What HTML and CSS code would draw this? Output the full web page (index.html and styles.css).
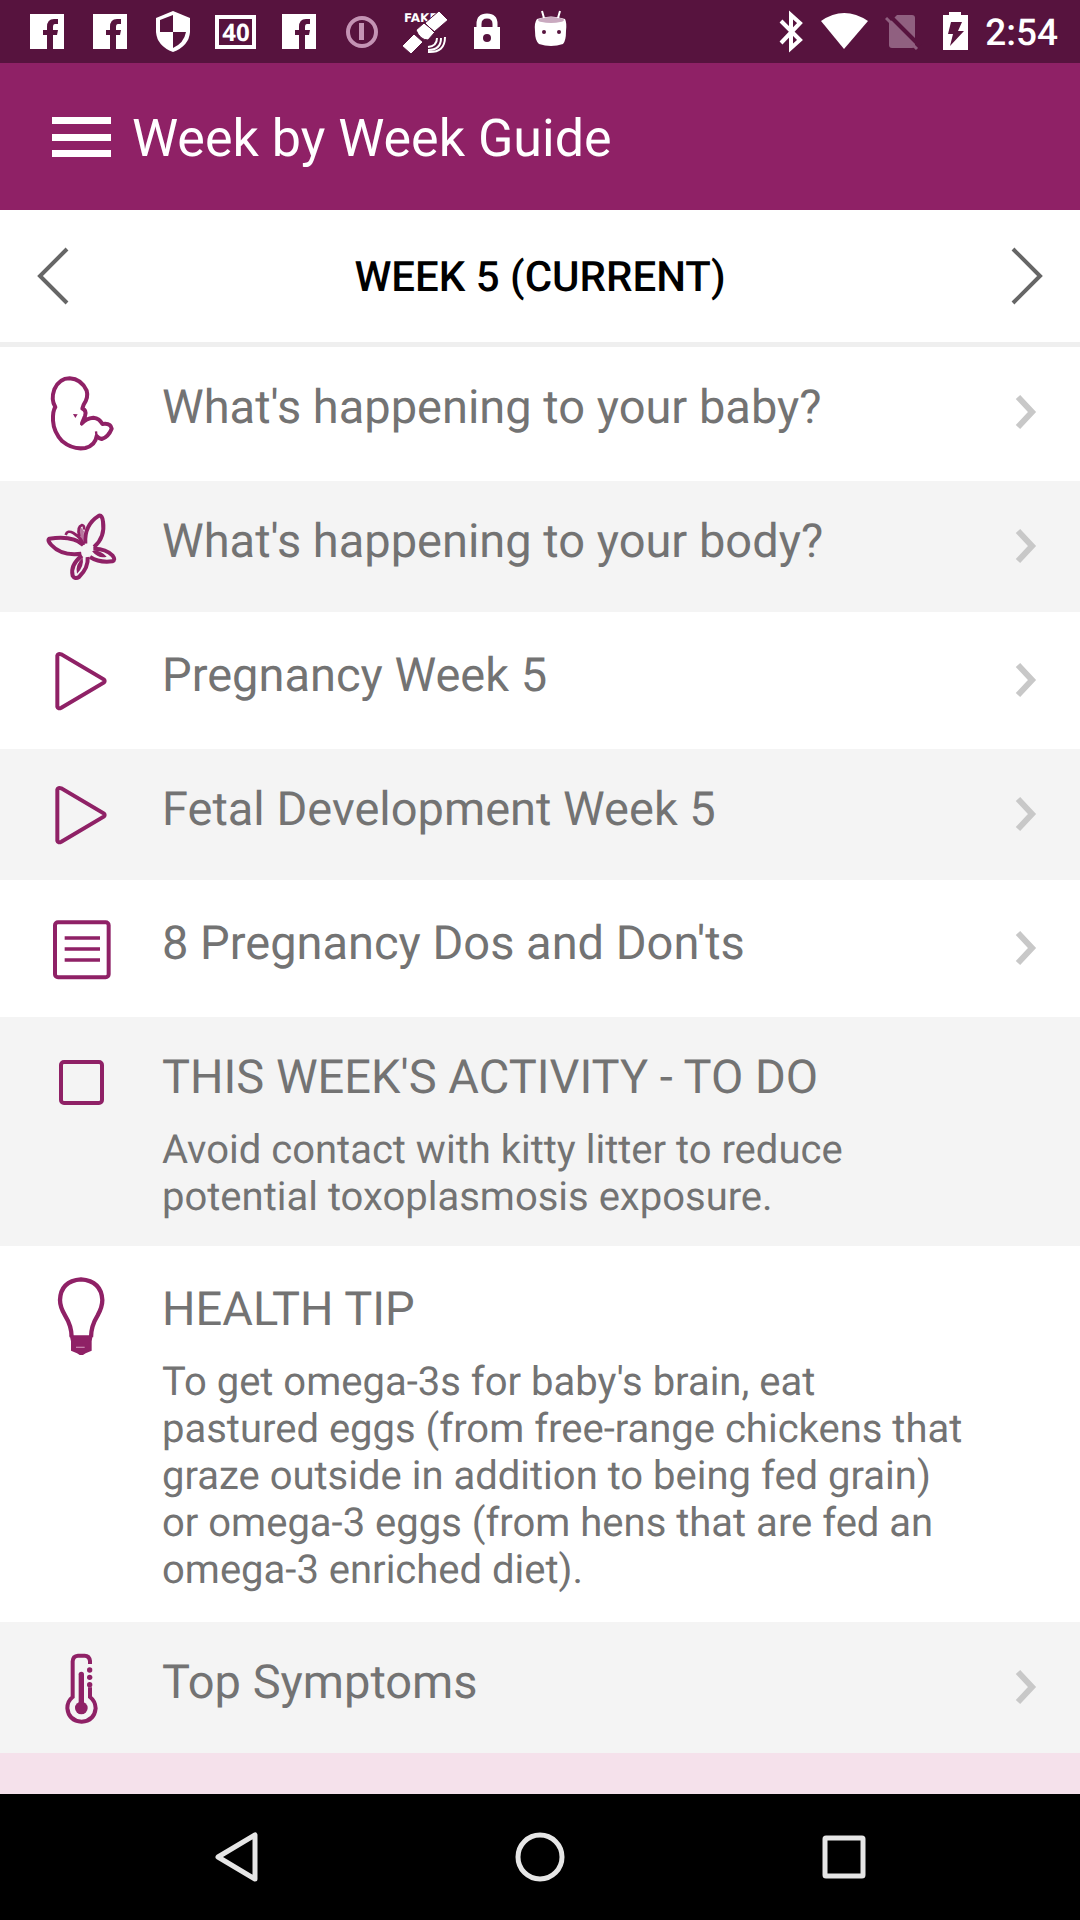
FILE: index.html
```html
<!DOCTYPE html>
<html lang="en">
<head>
<meta charset="utf-8">
<meta name="viewport" content="width=device-width, initial-scale=1">
<title>Week by Week Guide</title>
<link rel="stylesheet" href="styles.css">
</head>
<body>
<svg class="defs" aria-hidden="true">
  <symbol id="facebook" viewBox="0 0 63 63"><path fill="#fff" d="M14 14h34v35H14z"/><path fill="#57133e" d="M31 49V35h-4v-5h4v-3q0-8 7-8h4v5h-3q-2 0-2 3v3h5l-1 5h-4v14z"/></symbol>
  <symbol id="chevron" viewBox="0 0 24 36"><path d="M3 3l14 15L3 33" fill="none" stroke="currentColor" stroke-width="6"/></symbol>
  <symbol id="play" viewBox="63 121 240 240"><path d="M112 165V318Q114 326 124 321L251 246Q257 241 251 236L124 161Q114 158 112 165Z" fill="none" stroke="currentColor" stroke-width="12"/></symbol>
</svg>

<div class="status-bar">
  <div class="notifications">
    <svg class="note"><use href="#facebook"/></svg>
    <svg class="note"><use href="#facebook"/></svg>
    <svg class="note" viewBox="0 0 63 63"><path fill="#fff" d="M31 11l17 7v14q-1 14-17 20Q15 46 14 32V18z"/><path fill="#57133e" d="M31 15v17H18V20zM31 32h13q-2 11-13 16z"/></svg>
    <svg class="note" viewBox="0 0 63 63"><rect x="12" y="17" width="37" height="30" fill="none" stroke="#fff" stroke-width="4"/><text x="31" y="41" class="battery-level">40</text></svg>
    <svg class="note"><use href="#facebook"/></svg>
    <svg class="note" viewBox="0 0 63 63"><circle cx="31" cy="32" r="14" fill="none" stroke="#c493b4" stroke-width="4"/><rect x="28" y="23" width="5" height="17" fill="#c493b4"/></svg>
    <svg class="note" viewBox="0 0 63 63"><text x="10" y="22" class="fake">FAKE</text><path fill="#fff" stroke="#57133e" stroke-width="1" d="M8 46l12-12 9 8-12 12zM22 30l8-7 11 9-7 8q-8 0-12-10zM31 23L45 11l9 9-14 12z"/><path d="M43 38q0 8-9 9M47 38q0 12-13 12M51 37q0 16-17 15" fill="none" stroke="#fff" stroke-width="2"/></svg>
    <svg class="note" viewBox="0 0 63 63"><rect x="17" y="27" width="26" height="22" fill="#fff"/><path d="M22 28v-4q0-8 8-8t8 8v4" fill="none" stroke="#fff" stroke-width="5"/><circle cx="30" cy="38" r="4" fill="#57133e"/></svg>
    <svg class="note" viewBox="0 0 63 63"><path d="M17 19q14-5 28 0 2 4 1 12 0 10-3 13-12 4-24 0-4-3-4-13-1-8 2-12z" fill="#fff"/><ellipse cx="31" cy="20" rx="13" ry="3" fill="#c9a9bf"/><path d="M24 18l-2-7M38 18l2-7" stroke="#fff" stroke-width="2"/><circle cx="24" cy="32" r="2" fill="#57133e"/><circle cx="39" cy="32" r="2" fill="#57133e"/></svg>
  </div>
  <div class="system">
    <svg width="25" height="63" viewBox="0 0 25 63"><path d="M2 21l19 19-9 8V15l9 8L2 43" fill="none" stroke="#fff" stroke-width="4"/></svg>
    <svg width="47" height="63" viewBox="0 0 47 63"><path d="M0 21q23-16 47 0L23 49z" fill="#fff"/></svg>
    <svg width="41" height="63" viewBox="0 0 41 63"><path d="M4 23l8-8h15q3 0 3 3v27q0 3-3 3H7q-3 0-3-3z" fill="#906080"/><path d="M3 14l32 32" stroke="#57133e" stroke-width="4"/><path d="M1 18l31 31" stroke="#906080" stroke-width="3"/></svg>
    <svg width="25" height="63" viewBox="0 0 25 63"><path d="M0 15h6v-3h12v3h7v35H0z" fill="#fff"/><path d="M8 22h11l-4 9h6L7 46l3-12H5z" fill="#57133e"/></svg>
    <span class="clock">2:54</span>
  </div>
</div>

<header class="app-bar">
  <button class="menu" aria-label="Menu"><svg width="59" height="40" viewBox="0 0 59 40"><path d="M0 0h59v7H0zM0 17h59v7H0zM0 33h59v7H0z" fill="#fff"/></svg></button>
  <h1 class="title">Week by Week Guide</h1>
</header>

<main class="content">
  <div class="week">
    <button class="step" aria-label="Previous week"><svg width="32" height="58" viewBox="0 0 32 58"><path d="M30 2L3 29l27 27" fill="none" stroke="#666" stroke-width="4"/></svg></button>
    <h2 class="week-name">WEEK 5 (CURRENT)</h2>
    <button class="step" aria-label="Next week"><svg width="32" height="58" viewBox="0 0 32 58"><path d="M2 2l27 27L2 56" fill="none" stroke="#666" stroke-width="4"/></svg></button>
  </div>

  <ul class="list">
    <li><a class="row" href="#baby">
      <span class="icon"><svg class="glyph" viewBox="63 69 240 240"><path d="M106 171Q92 149 103 118Q118 85 149 85Q184 87 200 122Q206 143 191 164L187 176Q201 181 195 198L186 220Q198 205 220 203Q239 205 247 222Q272 218 275 236Q265 261 245 267Q236 265 230 258Q226 286 196 294Q158 300 127 274Q101 247 99 212Q98 182 106 171Z" fill="none" stroke="currentColor" stroke-width="12" stroke-linejoin="round"/><path d="M228 244l2 18M183 226l10-17" stroke="currentColor" stroke-width="7"/><path d="M159 192l14 1-7 11z" fill="currentColor"/></svg></span>
      <span class="name">What's happening to your baby?</span>
      <svg class="more"><use href="#chevron"/></svg></a></li>
    <li><a class="row shade" href="#body">
      <span class="icon"><svg class="glyph" viewBox="63 472 240 240"><g fill="none" stroke="currentColor" stroke-width="12" stroke-linejoin="round"><path d="M196 582Q192 526 237 498Q247 496 249 516Q256 563 222 592"/><path d="M190 586Q160 557 88 567Q81 572 94 586Q125 620 184 612"/><path d="M186 618Q150 646 158 678Q165 690 177 682Q206 654 203 622"/><path d="M210 622Q238 640 277 635Q288 631 278 618Q257 596 220 597"/></g><path d="M137 556Q142 540 160 550Q185 565 191 586M178 560Q170 532 186 526Q194 527 192 540" fill="none" stroke="currentColor" stroke-width="8"/><path d="M188 624Q164 645 171 672Q193 650 188 624zM216 605Q237 598 260 621Q237 629 216 605z" fill="currentColor"/><path d="M160 556Q177 565 188 586L192 545L180 530L176 561z" fill="currentColor" opacity=".6"/></svg></span>
      <span class="name">What's happening to your body?</span>
      <svg class="more"><use href="#chevron"/></svg></a></li>
    <li><a class="row" href="#pregnancy-video">
      <span class="icon"><svg class="glyph"><use href="#play"/></svg></span>
      <span class="name">Pregnancy Week 5</span>
      <svg class="more"><use href="#chevron"/></svg></a></li>
    <li><a class="row shade" href="#fetal-video">
      <span class="icon"><svg class="glyph"><use href="#play"/></svg></span>
      <span class="name">Fetal Development Week 5</span>
      <svg class="more"><use href="#chevron"/></svg></a></li>
    <li><a class="row" href="#dos-and-donts">
      <span class="icon"><svg class="glyph" viewBox="63 927 240 240"><g fill="none" stroke="currentColor"><rect x="105" y="967" width="161" height="165" rx="9" stroke-width="12"/><path d="M134 1014h106M134 1047h106M134 1080h106" stroke-width="10"/></g></svg></span>
      <span class="name">8 Pregnancy Dos and Don'ts</span>
      <svg class="more"><use href="#chevron"/></svg></a></li>
    <li><div class="row shade">
      <span class="icon"><input class="check" type="checkbox" id="activity"></span>
      <div class="text">
        <label class="name" for="activity">THIS WEEK'S ACTIVITY - TO DO</label>
        <p class="detail">Avoid contact with kitty litter to reduce potential toxoplasmosis exposure.</p>
      </div></div></li>
    <li><div class="row">
      <span class="icon"><svg class="glyph" viewBox="63 763 240 240"><path d="M155 950Q155 916 135 884Q120 859 120 838Q122 781 183 776Q244 781 247 838Q247 859 233 884Q213 916 213 950" fill="none" stroke="currentColor" stroke-width="13"/><path d="M149 944h69l-3 18v28l-18 8-13 8-13-8-18-8v-28z" fill="currentColor"/><path d="M168 980h26" stroke="#c57eaa" stroke-width="4"/></svg></span>
      <div class="text">
        <h3 class="name">HEALTH TIP</h3>
        <p class="detail">To get omega-3s for baby's brain, eat pastured eggs (from free-range chickens that graze outside in addition to being fed grain) or omega-3 eggs (from hens that are fed an omega-3 enriched diet).</p>
      </div></div></li>
    <li><a class="row shade" href="#symptoms">
      <span class="icon"><svg class="glyph" viewBox="63 144 240 240"><path d="M210 192V183Q208 167 194 167H174Q159 168 158 184V291Q142 303 142 325Q146 363 185 365Q223 363 227 325Q226 303 210 291V262" fill="none" stroke="currentColor" stroke-width="12"/><path d="M184 223V320" stroke="currentColor" stroke-width="16" stroke-linecap="round"/><g fill="currentColor"><circle cx="184" cy="324" r="19"/><circle cx="209" cy="210" r="8"/><circle cx="209" cy="232" r="8"/><circle cx="209" cy="254" r="8"/></g></svg></span>
      <span class="name">Top Symptoms</span>
      <svg class="more"><use href="#chevron"/></svg></a></li>
  </ul>
</main>

<nav class="nav-bar">
  <button aria-label="Back"><svg width="48" height="52" viewBox="0 0 48 52"><path d="M43 4v44L6 26z" fill="none" stroke="#e6e6e6" stroke-width="5" stroke-linejoin="round"/></svg></button>
  <button aria-label="Home"><svg width="50" height="50" viewBox="0 0 50 50"><circle cx="25" cy="25" r="22" fill="none" stroke="#e6e6e6" stroke-width="5"/></svg></button>
  <button aria-label="Recent apps"><svg width="44" height="44" viewBox="0 0 44 44"><rect x="3" y="3" width="38" height="38" rx="1" fill="none" stroke="#e6e6e6" stroke-width="5" stroke-linejoin="round"/></svg></button>
</nav>
</body>
</html>
```
FILE: styles.css
```css
* { box-sizing: border-box; }

body {
  margin: 0;
  min-height: 100vh;
  display: flex;
  flex-direction: column;
  background: #f5e1eb;
  font-family: Roboto, "Liberation Sans", sans-serif;
  text-rendering: geometricPrecision;
  color: #737373;
}

button {
  display: flex;
  align-items: center;
  justify-content: center;
  padding: 0;
  border: 0;
  background: none;
}

h1, h2, h3, p, ul { margin: 0; padding: 0; font-weight: 400; }

ul { list-style: none; }

svg { display: block; flex: none; }

.defs { display: none; }

.status-bar {
  display: flex;
  justify-content: space-between;
  height: 63px;
  padding: 0 22px 0 16px;
  background: #57133e;
  color: #fff;
}

.notifications { display: flex; }

.note { width: 63px; height: 63px; }

.battery-level {
  font: 700 24px "Open Sans", sans-serif;
  fill: #fff;
  text-anchor: middle;
}

.fake { font: 700 12px "DejaVu Sans", sans-serif; fill: #fff; }

.system { display: flex; align-items: center; gap: 17px; }

.clock {
  padding-top: 4px;
  font-size: 37px;
  font-weight: 500;
  line-height: 59px;
}

.app-bar {
  display: flex;
  align-items: center;
  gap: 21px;
  height: 147px;
  padding: 0 52px;
  background: #8f2166;
  color: #fff;
}

.title { padding-top: 4px; font-size: 52px; line-height: 60px; }

.content { flex: none; background: #fff; }

.week {
  display: flex;
  align-items: center;
  justify-content: space-between;
  height: 137px;
  padding: 0 37px;
  border-bottom: 5px solid #efefef;
}

.week-name { padding-top: 3px; font-size: 42px; font-weight: 500; color: #000; }

.list { display: flex; flex-direction: column; gap: 3px; }

.row {
  display: grid;
  grid-template-columns: 162px 1fr 112px;
  align-items: start;
  min-height: 131px;
  color: inherit;
  text-decoration: none;
}

.shade { background: #f4f4f4; }

.icon {
  display: flex;
  align-items: center;
  justify-content: center;
  height: 131px;
  color: #8f2166;
}

.glyph { width: 80px; height: 80px; }

.name {
  display: block;
  font-size: 47px;
  line-height: 56px;
}

.row > .name, .text { padding-top: 33px; }

.text { padding-bottom: 26px; }

.detail { margin-top: 20px; font-size: 40px; line-height: 47px; }

.more {
  width: 24px;
  height: 36px;
  margin: 47px 0 0 47px;
  color: #c8c8c8;
}

.check {
  appearance: none;
  width: 45px;
  height: 45px;
  margin: 0;
  border: 4px solid #8f2166;
  border-radius: 5px;
}

.nav-bar {
  display: grid;
  grid-template-columns: repeat(3, 1fr);
  height: 126px;
  margin-top: auto;
  padding: 0 84px;
  background: #000;
}
```
